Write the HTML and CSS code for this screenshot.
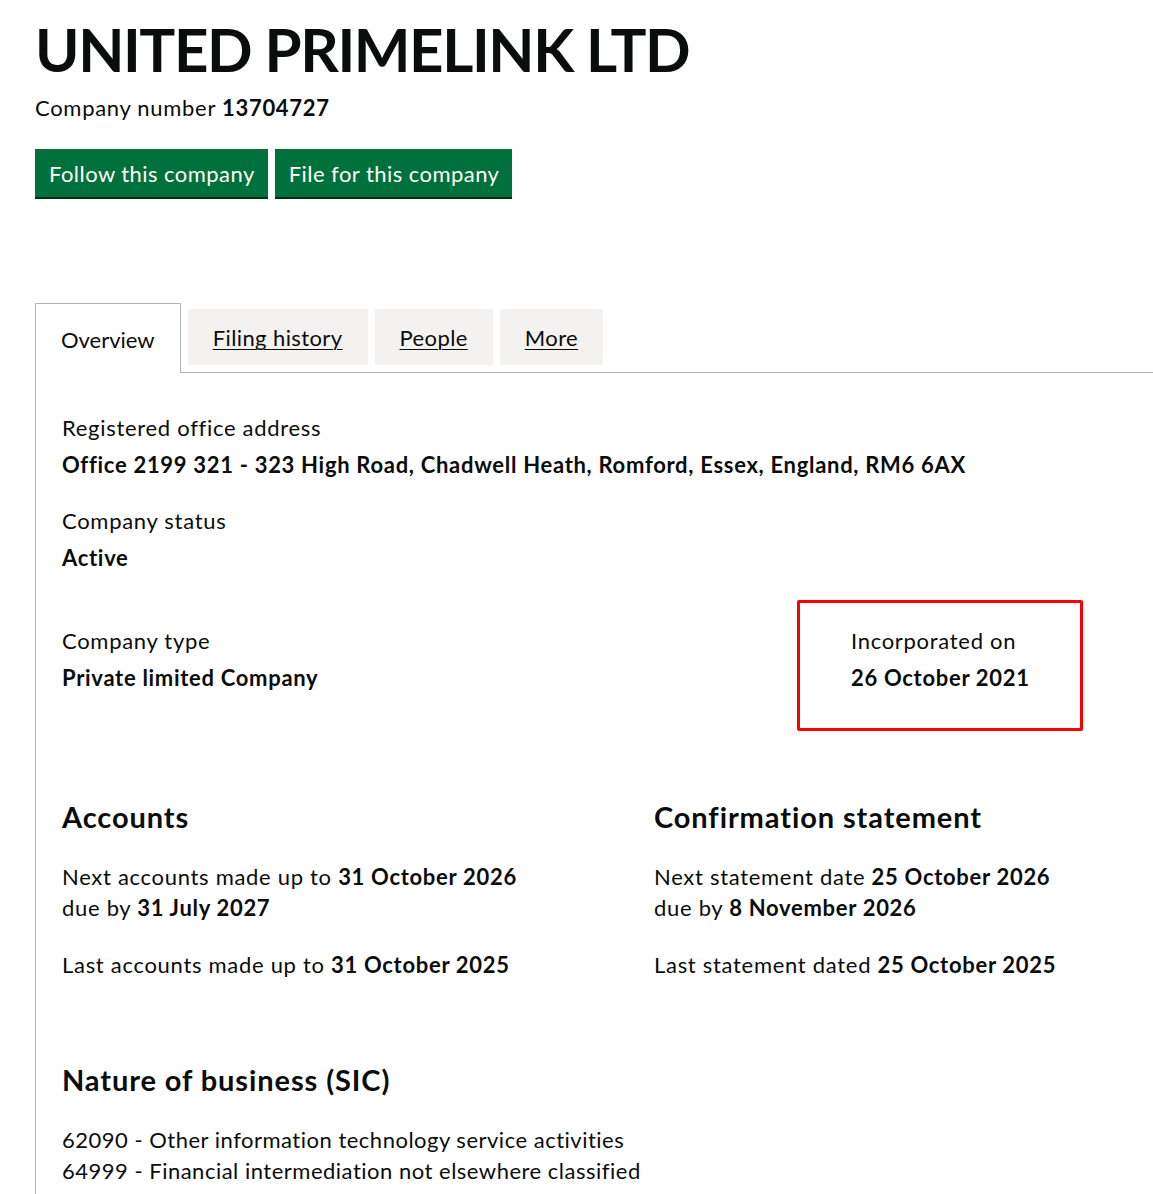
FILE: index.html
```html
<!DOCTYPE html>
<html lang="en">
<head>
    <meta charset="UTF-8">
    <meta name="viewport" content="width=device-width, initial-scale=1.0">
    <title>UNITED PRIMELINK LTD overview</title>
    <link rel="stylesheet" href="styles.css">
</head>
<body>
    <div class="page">
        <h1 class="company-name">UNITED PRIMELINK LTD</h1>
        <p class="company-number">Company number <strong>13704727</strong></p>
        <div class="actions">
            <a href="#" class="button">Follow this company</a>
            <a href="#" class="button">File for this company</a>
        </div>

        <ul class="tabs">
            <li class="tab tab-active"><span>Overview</span></li>
            <li class="tab"><a href="#">Filing history</a></li>
            <li class="tab"><a href="#">People</a></li>
            <li class="tab"><a href="#">More</a></li>
        </ul>

        <div class="panel">
            <dl class="field">
                <dt>Registered office address</dt>
                <dd>Office 2199 321 - 323 High Road, Chadwell Heath, Romford, Essex, England, RM6 6AX</dd>
            </dl>
            <dl class="field">
                <dt>Company status</dt>
                <dd>Active</dd>
            </dl>
            <div class="type-row">
                <dl class="field">
                    <dt>Company type</dt>
                    <dd>Private limited Company</dd>
                </dl>
                <dl class="field highlight">
                    <dt>Incorporated on</dt>
                    <dd>26 October 2021</dd>
                </dl>
            </div>

            <div class="columns">
                <div class="column">
                    <h2>Accounts</h2>
                    <p>Next accounts made up to <strong>31 October 2026</strong><br>
                        due by <strong>31 July 2027</strong></p>
                    <p>Last accounts made up to <strong>31 October 2025</strong></p>
                </div>
                <div class="column">
                    <h2>Confirmation statement</h2>
                    <p>Next statement date <strong>25 October 2026</strong><br>
                        due by <strong>8 November 2026</strong></p>
                    <p>Last statement dated <strong>25 October 2025</strong></p>
                </div>
            </div>

            <h2 class="sic-heading">Nature of business (SIC)</h2>
            <ul class="sic-list">
                <li>62090 - Other information technology service activities</li>
                <li>64999 - Financial intermediation not elsewhere classified</li>
            </ul>
        </div>
    </div>
</body>
</html>
```

FILE: styles.css
```css
body {
    font-family: Lato, "Noto Sans", Arial, sans-serif;
    margin: 0;
    padding: 0;
    background-color: #fff;
    color: #0b0c0c;
    font-size: 22px;
    line-height: 31px;
    letter-spacing: 0.7px;
    overflow: hidden;
}
.page {
    padding: 14px 0 0 35px;
}
.company-name {
    font-size: 60px;
    line-height: 70px;
    font-weight: 700;
    letter-spacing: -1.4px;
    margin: 0;
}
.company-number {
    margin: 8px 0 0;
}
.company-number strong {
    font-weight: 700;
}
.actions {
    display: flex;
    gap: 7px;
    margin-top: 26px;
}
.button {
    background-color: #00703c;
    color: #fff;
    text-decoration: none;
    padding: 9px 13px 8px 14px;
    box-shadow: 0 2px 0 #002d18;
    line-height: 31px;
    letter-spacing: 0.45px;
}
.tabs {
    list-style: none;
    margin: 106px 0 0;
    padding: 0;
    display: flex;
    gap: 7px;
    align-items: flex-start;
    border-bottom: 1px solid #b1b4b6;
    letter-spacing: 0.4px;
}
.tab {
    background-color: #f3f2f1;
    margin-top: 6px;
    padding: 13px 25px 12px;
    height: 56px;
    box-sizing: border-box;
}
.tab a {
    color: #0b0c0c;
    text-decoration: underline;
    text-underline-offset: 3px;
    text-decoration-thickness: 1px;
}
.tab-active {
    background-color: #fff;
    margin: 0 0 -1px;
    height: 70px;
    padding: 20px 25px 19px;
    border: 1px solid #b1b4b6;
    border-bottom: none;
    letter-spacing: 0;
}
.panel {
    border-left: 1px solid #b1b4b6;
    padding: 39px 0 0 26px;
}
.field {
    margin: 0 0 25px;
}
.field dt {
    margin-bottom: 6px;
}
.field dd {
    margin: 0;
    font-weight: 700;
}
.type-row {
    display: grid;
    grid-template-columns: 735px 286px;
    align-items: start;
    margin-top: 52px;
}
.type-row .field {
    margin: 0;
}
.type-row .highlight {
    border: 3px solid #ff0000;
    border-radius: 2px;
    height: 131px;
    box-sizing: border-box;
    padding: 22px 0 0 51px;
    margin-top: -25px;
}
.columns {
    display: grid;
    grid-template-columns: 592px 1fr;
    margin-top: 68px;
}
h2 {
    font-size: 29px;
    line-height: 36px;
    font-weight: 700;
    letter-spacing: 0.9px;
    margin: 0 0 26px;
}
.columns p {
    margin: 0 0 26px;
}
.columns strong {
    font-weight: 700;
}
.sic-heading {
    margin-top: 56px;
}
.sic-list {
    list-style: none;
    padding: 0;
    margin: 0;
    padding-bottom: 40px;
    letter-spacing: 0.5px;
}
```
